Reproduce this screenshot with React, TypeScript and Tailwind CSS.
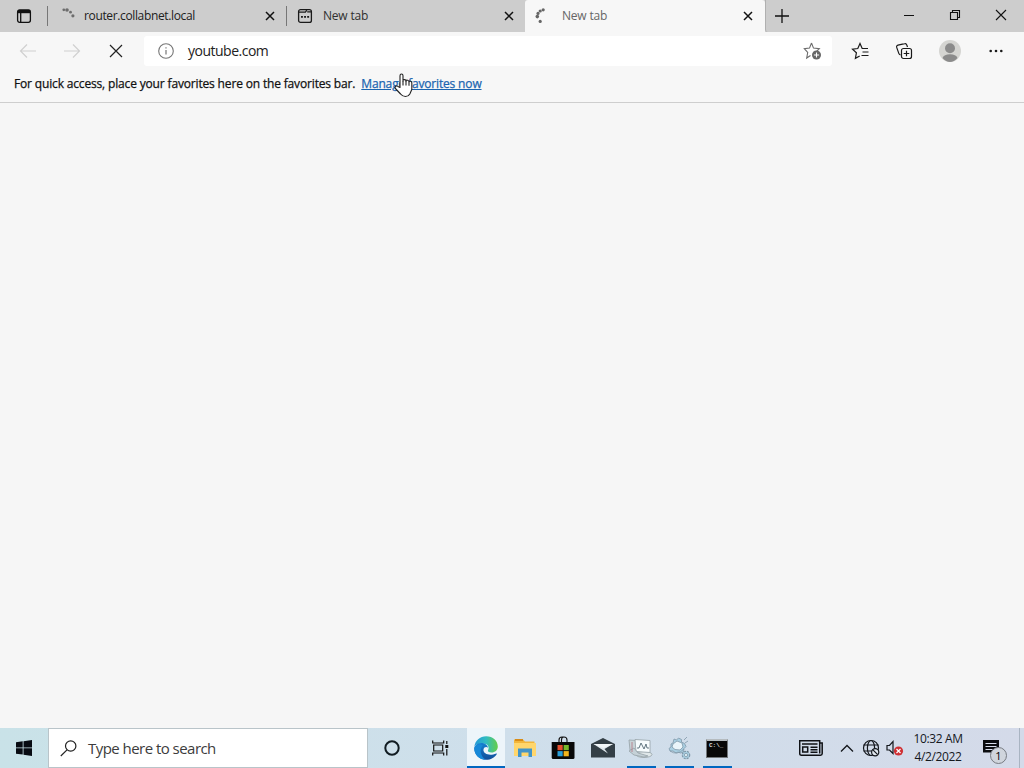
import type { ReactNode } from 'react';

const CloseIcon = () => (
  <svg width="10" height="10" viewBox="0 0 10 10" stroke="#111" strokeWidth="1.5">
    <path d="M1 1l8 8M9 1L1 9" />
  </svg>
);

const Spinner = ({ dots, color }: { dots: number[][]; color: string }) => (
  <svg width="16" height="16" viewBox="0 0 16 16" fill={color} className="shrink-0">
    {dots.map(([x, y, r]) => (
      <circle key={`${x}-${y}`} cx={x} cy={y} r={r} />
    ))}
  </svg>
);

const NewTabIcon = () => (
  <svg width="16" height="16" viewBox="0 0 16 16" fill="none" stroke="#1a1a1a" strokeWidth="1.3" className="shrink-0">
    <rect x="1.6" y="1.6" width="12.8" height="12.8" rx="2" />
    <path d="M1.6 4.2H8.4L9.8 2.2M10.2 3.8h4.2" />
    <path d="M4 8.9h1.9M7.1 8.9h1.9M10.2 8.9h1.9" strokeWidth="1.8" />
  </svg>
);

const ToolButton = ({ children, className }: { children: ReactNode; className: string }) => (
  <button className={`flex items-center justify-center shrink-0 h-[38px] ${className}`}>{children}</button>
);

function TitleBar() {
  return (
    <header className="flex h-8 bg-[#cdcdcd] text-xs text-[#202020] shrink-0">
      <div className="w-12 flex items-center justify-center shrink-0">
        <svg width="16" height="16" viewBox="0 0 16 16" fill="none" stroke="#111" strokeWidth="1.3">
          <rect x="1.6" y="1.9" width="12.8" height="12.4" rx="2" />
          <path d="M2 3.6h12" strokeWidth="3.2" />
          <path d="M4.7 4v10" />
        </svg>
      </div>
      <div className="w-60 flex items-center pl-3 pr-[11px] border-r border-[#777] shrink-0 self-center h-5 border-l -ml-px">
        <Spinner color="#6d6d6d" dots={[[3.8, 1.8, 1.4], [7, 2, 1.8], [10.5, 4.2, 1.4], [12.9, 7.8, 1.6]]} />
        <span className="ml-2 flex-1 tracking-[-0.36px]">router.collabnet.local</span>
        <CloseIcon />
      </div>
      <div className="w-[238px] flex items-center pl-[10px] pr-[11px] shrink-0">
        <NewTabIcon />
        <span className="ml-[10px] flex-1 text-[#303030] tracking-[-0.2px]">New tab</span>
        <CloseIcon />
      </div>
      <div className="w-60 flex items-center pl-2 pr-3 bg-[#f7f7f7] rounded-t-[3px] shrink-0">
        <Spinner color="#666" dots={[[10.2, 1.8, 1.6], [7.2, 3, 1.6], [5, 5.4, 1.6], [4.3, 8.6, 1.8], [7.2, 13.4, 1.6]]} />
        <span className="ml-[13px] flex-1 text-[#666] tracking-[-0.2px]">New tab</span>
        <CloseIcon />
      </div>
      <div className="flex-1 flex items-center pl-[9px] border-l border-[#b0b0b0] rounded-bl-[3px]">
        <svg width="14" height="14" viewBox="0 0 14 14" stroke="#111" strokeWidth="1.3">
          <path d="M7 0v14M0 7h14" />
        </svg>
      </div>
      <div className="flex items-center w-[138px] pb-[3px]">
        <div className="w-[46px] flex justify-center">
          <svg width="10" height="10" viewBox="0 0 10 10" stroke="#111"><path d="M0 5.5h10" /></svg>
        </div>
        <div className="w-[46px] flex justify-center">
          <svg width="12" height="12" viewBox="0 0 12 12" fill="none" stroke="#111" strokeWidth="1.1">
            <path d="M1.5 3.5h7v7h-7zM3.5 3.5v-2h7v7h-2" />
          </svg>
        </div>
        <div className="w-[46px] flex justify-center">
          <svg width="12" height="12" viewBox="0 0 12 12" stroke="#111" strokeWidth="1.1"><path d="M1 1l10 10M11 1L1 11" /></svg>
        </div>
      </div>
    </header>
  );
}

function Toolbar() {
  return (
    <div className="flex items-center h-[38px] bg-[#f7f7f7] pl-1.5 shrink-0">
      <ToolButton className="w-11">
        <svg width="18" height="16" viewBox="0 0 18 16" fill="none" stroke="#d0d0d0" strokeWidth="1.2"><path d="M17 8H1.5M8 1.5L1.5 8 8 14.5" /></svg>
      </ToolButton>
      <ToolButton className="w-11">
        <svg width="18" height="16" viewBox="0 0 18 16" fill="none" stroke="#d0d0d0" strokeWidth="1.2"><path d="M1 8h15.5M10 1.5L16.5 8 10 14.5" /></svg>
      </ToolButton>
      <ToolButton className="w-11">
        <svg width="14" height="14" viewBox="0 0 14 14" stroke="#222" strokeWidth="1.2"><path d="M1 1l12 12M13 1L1 13" /></svg>
      </ToolButton>
      <div className="ml-1.5 w-[688px] h-[30px] bg-white rounded-[3px] flex items-center pl-3.5 pr-[11px] shrink-0">
        <svg width="16" height="16" viewBox="0 0 16 16" fill="none" stroke="#767676" strokeWidth="1.1">
          <circle cx="8" cy="8" r="7.3" />
          <path d="M8 7v4.5M8 4.3v1.3" strokeWidth="1.2" />
        </svg>
        <span className="ml-3.5 flex-1 text-sm text-[#222] tracking-[-0.5px]">youtube.com</span>
        <svg width="18" height="18" viewBox="0 0 18 18" fill="none" stroke="#6b6b6b" strokeWidth="1.1">
          <path d="M8.5 1l2 5.1 5.8.5-3 3M7.500 13.500l-3.800 2.500 1-5.500L1.300 6.600 6.500 6.100 8.500 1" />
          <circle cx="13.500" cy="13" r="4.500" fill="#666" stroke="none" />
          <path d="M13.500 10.400v5.200M10.900 13h5.200" stroke="#fff" />
        </svg>
      </div>
      <ToolButton className="w-11 ml-1.5">
        <svg width="18" height="18" viewBox="0 0 18 18" fill="none" stroke="#1a1a1a" strokeWidth="1.2">
          <path d="M17 6.500h-5.800L9 1.500 6.800 6.500l-5.300.6 3.900 3.700-1 5.500 4.300-2.400M11.500 10h6M10.500 13.500h7" />
        </svg>
      </ToolButton>
      <ToolButton className="w-11">
        <svg width="18" height="18" viewBox="0 0 18 18" fill="none" stroke="#1a1a1a" strokeWidth="1.2">
          <path d="M12.5 5l-.8-2.200q-.5-1.500-2-1.100L3 3.200Q1.200 3.700 1.700 5.400l2.100 6q.4 1.300 1.700 1.500" />
          <rect x="6.5" y="6.5" width="10" height="10" rx="2" />
          <path d="M11.5 8.700v5.600M8.700 11.500h5.600" />
        </svg>
      </ToolButton>
      <ToolButton className="w-12">
        <svg width="22" height="22" viewBox="0 0 22 22" fill="#8b8b8b">
          <circle cx="11" cy="11" r="11" fill="#d5d5d2" />
          <circle cx="11" cy="8.2" r="5" />
          <path d="M3.500 18Q5 14.300 11 14.300T18.500 18Q15 22 11 22T3.500 18z" />
        </svg>
      </ToolButton>
      <ToolButton className="w-11">
        <svg width="14" height="4" viewBox="0 0 14 4" fill="#1a1a1a">
          <circle cx="1.7" cy="2" r="1.3" /><circle cx="7" cy="2" r="1.3" /><circle cx="12.3" cy="2" r="1.3" />
        </svg>
      </ToolButton>
    </div>
  );
}

const HandCursor = () => (
  <svg width="20" height="25" viewBox="0 0 20 25" fill="#fff" stroke="#222" strokeWidth="1.1" strokeLinejoin="round" className="absolute left-[33px] -top-[2px]">
    <path d="M6 14.500V2.700Q6 1 7.500 1T9 2.700V8Q9 6.500 10.500 6.600T12 8.100Q12.200 6.900 13.500 7.200T15 8.700Q15.500 7.800 16.700 8.300T17.800 10v6.500L15.800 21Q14.500 23.500 11.500 23.500T6.600 21L1.400 15.500Q.600 14.200 1.700 13.300T4 13.400z" />
    <path d="M9 8v4.500M12 8v4.500M15 8.700v4" fill="none" />
  </svg>
);

const TaskItem = ({ children, active, running }: { children: ReactNode; active?: boolean; running?: boolean }) => (
  <div className={`h-10 w-[38px] shrink-0 flex flex-col items-center ${active ? 'bg-[#edf5fa]' : ''}`}>
    <div className="h-[38px] pt-0.5 flex items-center">{children}</div>
    {(active || running) && <div className={`h-0.5 bg-[#0067c0] ${active ? 'w-full' : 'w-[29px]'}`} />}
  </div>
);

const EdgeIcon = () => (
  <svg width="24" height="24" viewBox="0 0 24 24">
    <defs>
      <linearGradient id="wave" x1="0" y1="0.3" x2="1" y2="0.3">
        <stop offset="0" stopColor="#2498d8" />
        <stop offset=".5" stopColor="#30bcc2" />
        <stop offset="1" stopColor="#65ce48" />
      </linearGradient>
      <linearGradient id="deep" x1="0" y1="0" x2="0" y2="1">
        <stop offset="0" stopColor="#1480d0" />
        <stop offset="1" stopColor="#124e99" />
      </linearGradient>
    </defs>
    <path d="M.3 11C1 4.500 6 .3 12.200.3 19 .3 23.800 5 23.800 10.500c0 3.700-2.800 6-6.200 6-2.900 0-4.200-1.200-3.600-2.300 1.500-2.600.4-6-3.800-6.500C6 7.200 2 8 .3 11z" fill="url(#wave)" />
    <path d="M.3 11.500C1.500 8 6 6 9.800 7.300c2.200.7 4 2.400 4.200 4.500-1.500-1.400-4-.8-4.500 1.600-.8 4.200 5.500 7.200 12.800 4.100.5-.2.7.2.4.7C20.500 21.800 16.500 23.900 12 23.800 5 23.800-.2 18 .3 11.500z" fill="url(#deep)" />
    <path d="M8.800 9.500c-4 4-2 11.500 3.200 14.300C5 23.800.2 18.500.3 12.500 1.500 8.500 6 7.200 8.800 9.500z" fill="#1688d8" />
  </svg>
);

function Taskbar() {
  return (
    <footer className="h-10 flex items-center bg-gradient-to-r from-[#c9e2e8] via-[#cfdfeb] to-[#d4dae9] shrink-0">
      <div className="w-12 flex justify-center shrink-0">
        <svg width="16" height="16" viewBox="0 0 16 16" fill="#080b12"><path d="M0 2.300l6.700-1v6.200H0zM7.500 1.200L16 0v7.500H7.500zM0 8.300h6.700v6.300L0 13.700zM7.500 8.300H16V16l-8.500-1.200z" /></svg>
      </div>
      <div className="w-80 h-10 bg-white border border-[#b9c4c9] flex items-center pl-[11px] shrink-0">
        <svg width="17" height="17" viewBox="0 0 17 17" fill="none" stroke="#222" strokeWidth="1.2"><circle cx="10.7" cy="6" r="5.2" /><path d="M7 9.900L.8 16" /></svg>
        <span className="ml-[11px] text-[15px] text-[#3c3c3c] tracking-[-0.54px]">Type here to search</span>
      </div>
      <div className="w-12 flex justify-center shrink-0">
        <svg width="16" height="16" viewBox="0 0 16 16" fill="none" stroke="#111c22" strokeWidth="2"><circle cx="8" cy="8" r="6.7" /></svg>
      </div>
      <div className="w-12 flex justify-center shrink-0">
        <svg width="17" height="16" viewBox="0 0 17 16" fill="none" stroke="#111" strokeWidth="1.2"><path d="M.7.5v2.500h11V.5M.7 15.500V13h11v2.500M1.700 5h9v6h-9zM14.800 1v3M14.800 9v6.500" /><path d="M13.300 5h3v3h-3z" fill="#111" stroke="none" /></svg>
      </div>
      <div className="flex ml-[3px]">
        <TaskItem active><EdgeIcon /></TaskItem>
        <div className="w-px" />
        <TaskItem>
          <svg width="22" height="20" viewBox="0 0 22 20">
            <path d="M0 1.500h9l2 2h9.500V18H0z" fill="#f2b63b" />
            <path d="M1 1h8v2H1z" fill="#d88c18" />
            <path d="M0 5h22v13H0z" fill="#ffd66c" />
            <path d="M4 10.500h14V19h-3.500v-4.500h-7V19H4z" fill="#4294c8" />
          </svg>
        </TaskItem>
        <TaskItem>
          <svg width="24" height="24" viewBox="0 0 24 24">
            <path d="M8 7V4Q8 1 11 1h2q3 0 3 3v3M10.500 7V4Q10.500 1 13 1" fill="none" stroke="#111" strokeWidth="1.1" />
            <path d="M.7 6h22.800v15.500q0 1.500-1.500 1.500H2.200Q.7 23 .7 21.500z" fill="#080808" />
            <path d="M6.500 9h5.200v5.200H6.500z" fill="#e65030" /><path d="M12.600 9h5.200v5.200h-5.200z" fill="#78b72a" />
            <path d="M6.500 15.100h5.200v5.200H6.500z" fill="#2aa0da" /><path d="M12.600 15.100h5.200v5.200h-5.200z" fill="#f2b51d" />
          </svg>
        </TaskItem>
        <div className="w-0.5" />
        <TaskItem>
          <svg width="24" height="20" viewBox="0 0 24 20"><path d="M0 6L12 0l12 6v13.500H0z" fill="#343f46" /><path d="M2.500 6h19.500l-8.500 5 3.500 4.500L2.500 6z" fill="#e1e9ee" /><path d="M2.500 6h19.500l-9.500 4z" fill="#f2f6f8" /></svg>
        </TaskItem>
        <TaskItem running>
          <svg width="26" height="22" viewBox="0 0 26 22" stroke="#9ba7ad" strokeWidth=".9">
            <path d="M1 3l8 .5V14l-7-1z" fill="#c8d3d7" /><ellipse cx="16" cy="17.500" rx="8" ry="3" fill="#dfe7e9" />
            <path d="M7 2.500l15 1v12l-14-1z" fill="#f7fcfd" /><path d="M9 11h2l2-5 3 6 2-5 1 4h2" fill="none" stroke="#536974" />
            <path d="M1 14l5-3 4 5 10 3-4 1-10-2z" fill="#c5d1d7" /><path d="M4 5v10" stroke="#b47d89" />
          </svg>
        </TaskItem>
        <TaskItem running>
          <svg width="24" height="24" viewBox="0 0 24 24" stroke="#8098a8" strokeWidth=".8">
            <path d="M7 3l2.500 1 2-2 3 1.500v2.500l3 1.500 1.500 3-2 2-.5 3.500-3 1-2.500-1-2 1-3-2-3 0-1-2.500 2-1.500 0-3 2-1z" fill="#a9cfe2" />
            <path d="M6 8l4-3 5 2 1 4-3 3-5-.5-3-2.500z" fill="#eaf5fa" />
            <path d="M3 15q7 5 14-2M17 4l3-3M18 7l3-2" fill="none" />
            <circle cx="19" cy="19" r="3.700" fill="#a9cfe2" strokeDasharray="2 1" strokeWidth="1.2" /><circle cx="19" cy="19" r="1.600" fill="#e2f1f7" />
          </svg>
        </TaskItem>
        <TaskItem running>
          <div className="w-[22px] h-[19px] bg-[#080808] border border-[#73777a] border-t-2 border-t-[#b5bbbf] pl-0.5 pt-px font-['Liberation_Mono'] font-bold text-[6px] leading-[7px] text-[#ddd]">C:\_</div>
        </TaskItem>
      </div>
      <div className="flex-1" />
      <svg width="24" height="16" viewBox="0 0 24 16" fill="none" stroke="#101216" strokeWidth="1.5" className="shrink-0">
        <path d="M.7.7h20V3h2.500v10.500q0 1.700-1.700 1.700H2.300Q.7 15.200.7 13.500zM20.700 3v10.500M3 4h15.500" />
        <path d="M3.700 7h5v5h-5zM11.500 7.200h7M11.500 9.700h7M11.500 12.200h7" />
      </svg>
      <svg width="14" height="9" viewBox="0 0 14 9" fill="none" stroke="#14171c" strokeWidth="1.3" className="ml-[17px] shrink-0"><path d="M1 7.500L7 1.500l6 6" /></svg>
      <svg width="18" height="18" viewBox="0 0 18 18" fill="none" stroke="#14171c" strokeWidth="1.2" className="ml-2 shrink-0">
        <circle cx="9" cy="9" r="7.5" /><ellipse cx="9" cy="9" rx="3.6" ry="7.5" /><path d="M1.500 6h15M1.500 12h15" />
        <circle cx="13.2" cy="13.2" r="3.6" fill="#e2e8ef" /><path d="M10.700 10.700l5 5" />
      </svg>
      <svg width="18" height="18" viewBox="0 0 18 18" fill="none" stroke="#14171c" strokeWidth="1.2" className="ml-[6px] shrink-0">
        <path d="M1 6.500h2.500L7 2.500v12L3.500 11H1z" /><circle cx="12.5" cy="12" r="4.6" fill="#cf3034" stroke="none" />
        <path d="M10.500 10l4 4M14.500 10l-4 4" stroke="#fff" />
      </svg>
      <div className="w-[68px] text-center text-xs leading-[18px] text-[#15181d] tracking-[-0.36px] shrink-0 pb-px">
        <div>10:32 AM</div>
        <div>4/2/2022</div>
      </div>
      <div className="relative w-12 h-10 shrink-0">
        <svg width="17" height="17" viewBox="0 0 17 17" className="absolute left-[11px] top-3">
          <path d="M0 0h16v12.500h-5V16l-3.500-3.500H0z" fill="#0c0d10" /><path d="M2.500 3.500h11M2.500 6.500h11M2.500 9.500h7" stroke="#d8ddeb" />
        </svg>
        <div className="absolute left-[18px] top-[19px] w-[17px] h-[17px] rounded-full bg-[#d0d5dd] border border-[#777b82] text-[11px] leading-[15px] text-center">1</div>
        <div className="absolute right-0 top-0 h-10 border-r border-[#a9b4c2]" />
      </div>
      <div className="w-1 shrink-0" />
    </footer>
  );
}

export default function App() {
  return (
    <main className="w-[1024px] h-[768px] overflow-hidden flex flex-col bg-[#f6f6f6] font-['Open_Sans','Noto_Sans',sans-serif]">
      <TitleBar />
      <Toolbar />
      <div className="h-[33px] flex pt-[5px] pl-3.5 text-xs leading-[18px] text-[#111] bg-[#f7f7f7] border-b border-[#cecece] shrink-0 tracking-[-0.16px] [-webkit-text-stroke:0.25px]">
        <span>For quick access, place your favorites here on the favorites bar.</span>
        <div className="relative ml-1.5">
          <a className="underline text-[#1b65b0]">Manage favorites now</a>
          <HandCursor />
        </div>
      </div>
      <section className="flex-1" />
      <Taskbar />
    </main>
  );
}
